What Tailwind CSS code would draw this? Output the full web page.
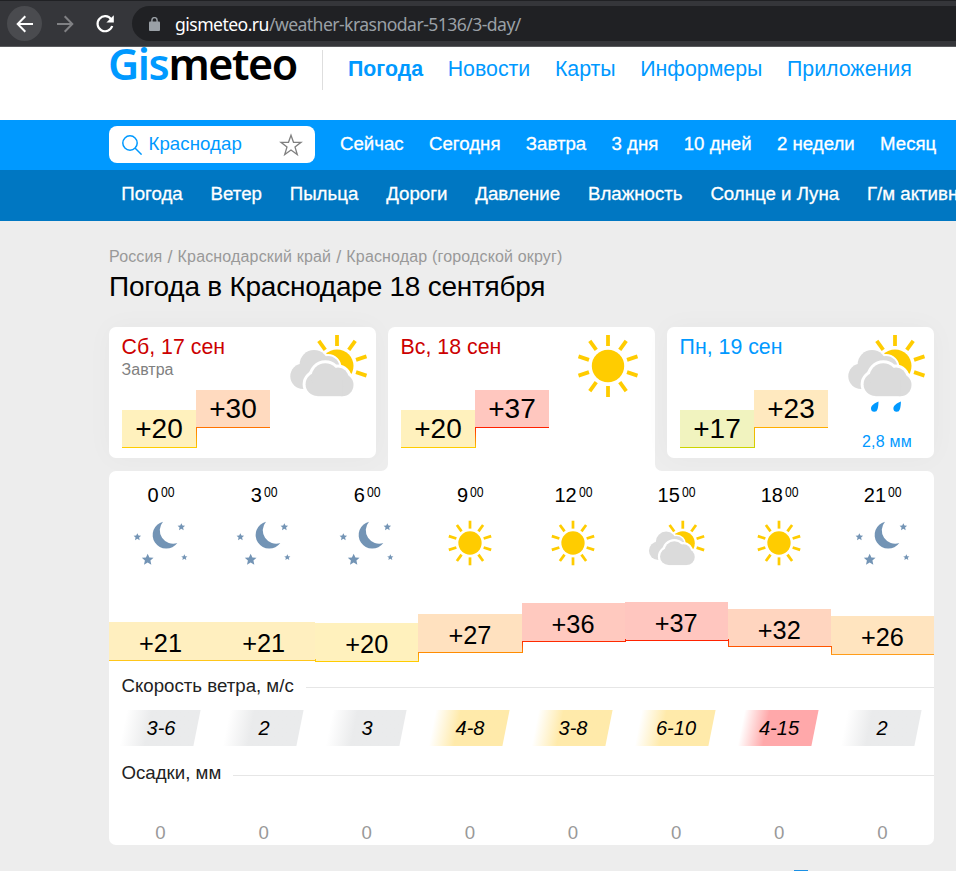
<!DOCTYPE html>
<html lang="ru">
<head>
<meta charset="utf-8">
<title>Погода в Краснодаре</title>
<script src="https://cdn.jsdelivr.net/npm/@tailwindcss/browser@4"></script>
</head>
<body class="w-[956px] h-[871px] overflow-hidden bg-[#ededed] text-black font-['Liberation_Sans',Arial,sans-serif]">
<svg class="hidden">
  <defs>
    <g id="rays-front" stroke="#fc0" stroke-width="3.8" stroke-linecap="butt">
      <path d="M0-31V-20"/><path d="M0-31V-20" transform="rotate(36)"/><path d="M0-31V-20" transform="rotate(72)"/><path d="M0-31V-20" transform="rotate(108)"/><path d="M0-31V-20" transform="rotate(-36)"/>
    </g>
    <g id="back-cloud"><circle cx="-34" cy="10.3" r="12.7"/><circle cx="-23" cy="-1.7" r="14.3"/><circle cx="-9" cy="1.5" r="11.5"/><path d="M-34 8H-5V23H-34z"/></g>
    <g id="front-cloud"><circle cx="-19.7" cy="18.3" r="11.7"/><circle cx="5.3" cy="19" r="11.2"/><circle cx="-11.7" cy="11" r="13.7"/><circle cx="1" cy="12" r="10.5"/><path d="M-19.7 14H5.3V30.2H-19.7z"/></g>
    <symbol id="sun" viewBox="-32 -32 64 64">
      <circle r="16.2" fill="#fc0"/>
      <use href="#rays-front"/>
      <g stroke="#fc0" stroke-width="3.8"><path d="M0-31V-20" transform="rotate(144)"/><path d="M0-31V-20" transform="rotate(180)"/><path d="M0-31V-20" transform="rotate(216)"/><path d="M0-31V-20" transform="rotate(252)"/><path d="M0-31V-20" transform="rotate(288)"/></g>
    </symbol>
    <symbol id="cloudy" viewBox="-48 -32 80 80">
      <use href="#rays-front"/><circle r="16.5" fill="#fc0"/>
      <use href="#back-cloud" fill="#fff" stroke="#fff" stroke-width="4"/>
      <use href="#back-cloud" fill="#dbdbdb"/>
      <use href="#front-cloud" fill="#fff" stroke="#fff" stroke-width="6"/>
      <use href="#front-cloud" fill="#dbdbdb"/>
    </symbol>
    <path id="star" d="M0-10 2.9-3.6 9.8-3 4.6 1.5 6.1 8.3 0 4.7-6.1 8.3-4.6 1.5-9.8-3-2.9-3.6z"/>
    <symbol id="night" viewBox="-84 -75 168 150">
      <g fill="#7394b5">
        <path d="M6-64A41 41 0 1 0 49 0A40 40 0 0 1 6-64z"/>
        <use href="#star" transform="translate(-71 -18) scale(1.15)"/>
        <use href="#star" transform="translate(61 -48) scale(1.15)"/>
        <use href="#star" transform="translate(-40 50) scale(1.8)"/>
        <use href="#star" transform="translate(70 43) scale(.95)"/>
      </g>
    </symbol>
  </defs>
</svg>

<div class="h-[47px] flex items-center bg-[#35363a] border-t border-t-[#202124] border-b border-b-[#5a5b5e] pl-[7px]">
  <div class="size-[35px] rounded-full bg-[#4a4b4f] flex items-center justify-center">
    <svg class="size-[18px]" viewBox="0 0 18 18" fill="none" stroke="#fff" stroke-width="2"><path d="M17 9H2M9.3 1.3 1.7 9l7.6 7.7"/></svg>
  </div>
  <svg class="size-[18px] ml-[14px]" viewBox="0 0 18 18" fill="none" stroke="#808184" stroke-width="2"><path d="M1 9h15M8.7 1.3 16.3 9l-7.6 7.7"/></svg>
  <svg class="size-[20px] ml-[21px]" viewBox="0 0 20 20"><path d="M16.2 5.4A7.5 7.5 0 1 0 17.2 12" fill="none" stroke="#fff" stroke-width="2.2"/><path d="M18.8 1.2V8.6H11.4z" fill="#fff"/></svg>
  <div class="ml-[17px] h-[35px] flex-1 rounded-l-full bg-[#202124] flex items-center pl-[17px]">
    <svg class="w-[11px] h-[14px]" viewBox="0 0 11 14"><rect y="4.6" width="11" height="9.4" rx="1" fill="#9aa0a6"/><path d="M2.9 5V3.2a2.6 2.6 0 0 1 5.2 0V5" fill="none" stroke="#9aa0a6" stroke-width="1.4"/></svg>
    <div class="ml-[15px] font-['Noto_Sans','Open_Sans',sans-serif] text-[17.6px] leading-[24px] text-[#9aa0a6] whitespace-nowrap"><span class="text-white tracking-[-0.55px]">gismeteo.ru</span><span class="tracking-[-0.56px]">/weather-krasnodar-5136/3-day/</span></div>
  </div>
</div>

<header class="h-[73px] bg-white flex pl-[108px]">
  <div class="w-[214px] h-[36px] -mt-[4px] font-['Noto_Sans',sans-serif] font-semibold text-[43px] leading-[42px] tracking-[-1.4px] whitespace-nowrap"><span class="text-[#09f]">Gis</span>meteo</div>
  <div class="mt-[3px] h-[40px] w-px bg-[#dedede]"></div>
  <nav class="ml-[25px] mt-[10px] flex gap-[24.6px] text-[21.33px] leading-[24px] text-[#09f] whitespace-nowrap"><b>Погода</b><span>Новости</span><span>Карты</span><span>Информеры</span><span>Приложения</span></nav>
</header>

<div class="h-[50px] bg-[#09f] flex items-center pl-[109px]">
  <div class="w-[206px] h-[37px] mt-[-1px] rounded-lg bg-white flex items-center pl-[13px]">
    <svg class="size-[20px]" viewBox="0 0 20 20" fill="none" stroke="#09f" stroke-width="1.5"><circle cx="8" cy="8" r="7.2"/><path d="m13 13 6.6 6.6"/></svg>
    <span class="ml-[6.5px] w-[131px] -mt-[2px] text-[18.67px] leading-[22px] tracking-[0.05px] text-[#09f]">Краснодар</span>
    <svg class="size-[24px] mt-px -ml-[0.5px]" viewBox="0 0 24 24" fill="none" stroke="#808080" stroke-width="1.3"><path d="M12 2.2 14.5 9.300H22L16 13.900 18.300 21.500 12 17 5.700 21.500 8 13.900 2 9.300H9.500z"/></svg>
  </div>
  <nav class="ml-[25px] -mt-[2px] flex gap-[25.3px] text-[18.67px] leading-[22px] text-white whitespace-nowrap [-webkit-text-stroke:0.3px_white]"><span>Сейчас</span><span>Сегодня</span><span>Завтра</span><span>3 дня</span><span>10 дней</span><span>2 недели</span><span>Месяц</span></nav>
</div>
<div class="h-[51px] bg-[#0077c2] flex items-center pl-[121.300px] overflow-hidden">
  <nav class="-mt-[3px] flex gap-[27.900px] text-[18.67px] leading-[22px] text-white whitespace-nowrap [-webkit-text-stroke:0.3px_white]"><span>Погода</span><span>Ветер</span><span>Пыльца</span><span>Дороги</span><span>Давление</span><span>Влажность</span><span>Солнце и Луна</span><span>Г/м активн</span></nav>
</div>

<main class="ml-[109px] w-[825px]">
  <div class="pt-[26px] text-[16px] leading-[20px] tracking-[0.16px] text-[#999] whitespace-nowrap flex gap-[5px]"><span>Россия</span><span class="text-[18px]">/</span><span>Краснодарский край</span><span class="text-[18px]">/</span><span>Краснодар (городской округ)</span></div>
  <h1 class="mt-[3px] text-[28px] leading-[34px] tracking-[-0.24px] whitespace-nowrap">Погода в Краснодаре 18 сентября</h1>

  <section id="days" class="mt-[23px] h-[144px] grid grid-cols-3 gap-[12px] items-start"></section>

  <section class="relative h-[374px] rounded-[7px] bg-white">
    <div id="hours" class="grid grid-cols-8 pt-[12px]"></div>
    <div id="icons" class="grid grid-cols-8 h-[52px] mt-[19.5px] justify-items-center items-center"></div>
    <div id="temps" class="grid grid-cols-8 h-[62px] mt-[23.5px] items-start"></div>
    <div class="mt-[10px] flex items-center gap-[12px] pl-[12.5px] h-[24px] text-[18.67px] leading-[24px] text-[#222]"><span>Скорость ветра, м/с</span><span class="h-px flex-1 mt-[3px] bg-[#e6e6e6]"></span></div>
    <div id="winds" class="grid grid-cols-8 mt-[12px] justify-items-center"></div>
    <div class="mt-[15px] flex items-center gap-[12px] pl-[12.5px] h-[24px] text-[18.67px] leading-[24px] text-[#222]"><span>Осадки, мм</span><span class="h-px flex-1 mt-[5px] bg-[#e6e6e6]"></span></div>
    <div id="rain" class="grid grid-cols-8 mt-[37px] text-center text-[18.67px] leading-[22px] text-[#999]"></div>
  </section>
  <div class="mt-[25px] ml-[685px] h-px w-[14px] bg-[#1a90e5]"></div>
</main>

<script>
const days = [
  {date:'Сб, 17 сен', color:'text-[#c00]', note:'Завтра', icon:'cloudy', lo:['+20','#fff1bd','#fc0'], hi:['+30','#ffdabf','#ff7300']},
  {date:'Вс, 18 сен', color:'text-[#c00]', icon:'sun', active:true, lo:['+20','#fff1bd','#fc0'], hi:['+37','#ffc7bf','#ff2200']},
  {date:'Пн, 19 сен', color:'text-[#09f]', icon:'cloudy', rain:'2,8 мм', lo:['+17','#f1f3bf','#cdd400'], hi:['+23','#ffe9bf','#ffae00']}
];
document.getElementById('days').innerHTML = days.map(d => `
  <article class="relative w-[267px] ${d.active ? 'h-[144px] rounded-t-[7px]' : 'h-[131px] rounded-[7px] shadow-[0_0_28px_rgba(0,0,0,0.03)]'} bg-white flex justify-between">
    <div class="pl-[12px] pt-[8px]">
      <div class="pl-[0.6px] text-[21.33px] leading-[24px] whitespace-nowrap ${d.color}">${d.date}</div>
      <div class="h-[31px] pl-[0.6px] pt-px text-[16px] leading-[20px] text-[#808080]">${d.note || ''}</div>
      <div class="pl-px flex items-start text-[28px] text-center">
        <div class="mt-[20px] w-[74px] h-[38px] leading-[37px] border-b-[1.4px]" style="background:${d.lo[1]};border-color:${d.lo[2]}">${d.lo[0]}</div>
        <div class="relative w-[74px] h-[38px] leading-[37px] border-b-[1.4px]" style="background:${d.hi[1]};border-color:${d.hi[2]}">${d.hi[0]}<i class="absolute left-0 top-[37px] w-px h-[21px]" style="background:linear-gradient(${d.hi[2]},${d.lo[2]})"></i></div>
      </div>
    </div>
    <div class="w-[88px] flex flex-col items-center pt-[7px] ${d.icon === 'sun' ? 'pr-[6px]' : 'pr-[6px]'}">
      <svg class="${d.icon === 'sun' ? 'size-[64px]' : 'size-[80px]'}"><use href="#${d.icon}"/></svg>
      ${d.rain ? `<svg class="w-[34px] h-[12px] -mt-[13px] -ml-[3px]" viewBox="0 0 34 12" fill="#09f"><path d="M9.500 .5C5 2.500 2 4.500 2 7.800A3.300 3.300 0 0 0 8.500 8.300C9.200 6 9.500 3 9.500 .5zM31.900 .5C27.400 2.500 24.400 4.500 24.400 7.800A3.300 3.300 0 0 0 30.900 8.300C31.600 6 31.900 3 31.900 .5z"/></svg><div class="mt-[20px] text-[16px] leading-[18px] tracking-[0.25px] text-[#09f] whitespace-nowrap">${d.rain}</div>` : ''}
    </div>
    ${d.active ? `<svg class="absolute -left-[7px] bottom-0 size-[7px]" viewBox="0 0 7 7" fill="#fff"><path d="M7 0V7H0A7 7 0 0 0 7 0z"/></svg><svg class="absolute -right-[7px] bottom-0 size-[7px]" viewBox="0 0 7 7" fill="#fff"><path d="M0 0V7H7A7 7 0 0 1 0 0z"/></svg>` : ''}
  </article>`).join('');

const hours = [
  [0,'night','+21',20,'#ffefbf','#ffc61a','3-6','g'],
  [3,'night','+21',20,'#ffefbf','#ffc61a','2','g'],
  [6,'night','+20',21.3,'#fff1bd','#fc0','3','g'],
  [9,'sun','+27',12.4,'#ffe1bf','#ff8c00','4-8','y'],
  [12,'sun','+36',1.3,'#ffc9bf','#ff2a00','3-8','y'],
  [15,'cloudy','+37',0,'#ffc6bf','#ff2200','6-10','y'],
  [18,'sun','+32',6.5,'#ffd5bf','#ff5500','4-15','r'],
  [21,'night','+26',14,'#ffe4bf','#ff9d1a','2','g']
];
const fill = {g:'bg-linear-to-r from-white from-3% to-[#eaebec] to-36%', y:'bg-linear-to-r from-white from-3% to-[#ffeaaa] to-36%', r:'bg-linear-to-r from-white from-3% to-[#ffa8aa] to-36%'};
const size = {night:'w-[56px] h-[50px] -mt-[19px] ml-px', sun:'size-[46px] -mt-[19px]', cloudy:'size-[58px] -mt-[7px] ml-px'};
const put = (id, f) => document.getElementById(id).innerHTML = hours.map(f).join('');
put('hours', h => `<div class="flex justify-center items-start text-[20px] leading-[24px]"><span>${h[0]}</span><span class="w-[13px] ml-[2px]"><sup class="block origin-left scale-x-[0.84] text-[14.6px] leading-[19px] top-0">00</sup></span></div>`);
put('icons', h => `<svg class="${size[h[1]]}"><use href="#${h[1]}"/></svg>`);
put('temps', (h, i) => {
  const p = hours[i - 1], a = p && Math.min(p[3], h[3]), b = p && Math.max(p[3], h[3]);
  const link = p && a !== b ? `<i class="absolute left-0 w-px" style="top:${37.4 + a - h[3]}px;height:${b - a + 1.4}px;background:linear-gradient(${p[3] < h[3] ? p[5] + ',' + h[5] : h[5] + ',' + p[5]})"></i>` : '';
  return `<div class="relative h-[38.8px] text-center text-[25.33px] leading-[42px] border-b-[1.4px]" style="margin-top:${h[3]}px;background:${h[4]};border-color:${h[5]}">${h[2]}${link}</div>`;
});
put('winds', h => `<div class="w-[76px] h-[36px] -ml-[4px] -skew-x-[11.3deg] ${fill[h[7]]}"><div class="skew-x-[11.3deg] pl-[4px] italic text-[20px] leading-[36px] text-center">${h[6]}</div></div>`);
put('rain', () => '<span>0</span>');
</script>
</body>
</html>
